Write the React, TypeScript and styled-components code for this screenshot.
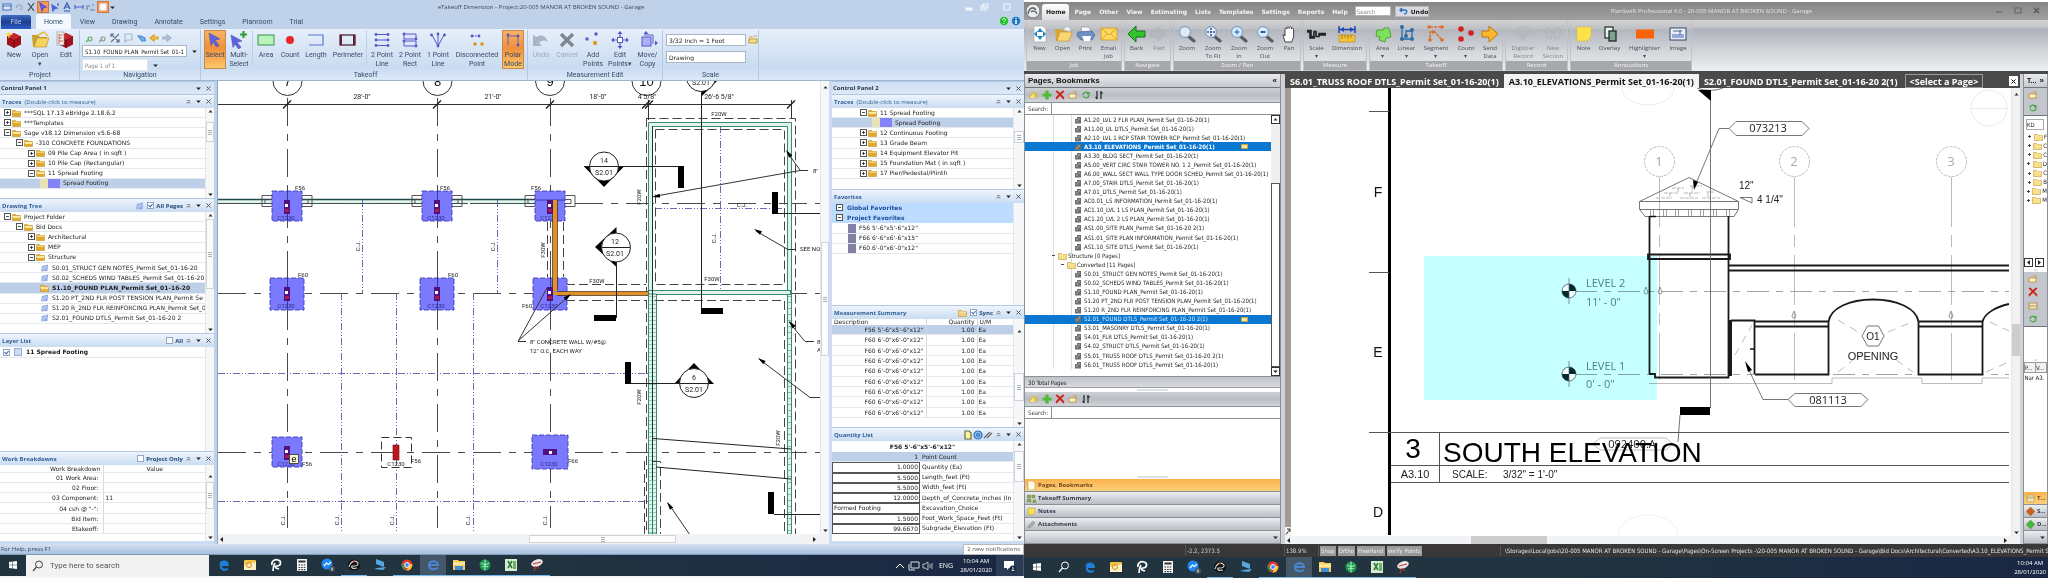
import React, { ReactNode } from 'react';
import styled, { createGlobalStyle, css } from 'styled-components';

const dejavu = '"DejaVu Sans", sans-serif';
const condensed = '"DejaVu Sans Condensed", "DejaVu Sans", sans-serif';
const open = '"Open Sans", sans-serif';
const roboto = 'Roboto, sans-serif';
const arial = '"Liberation Sans", sans-serif';

const Global = createGlobalStyle`
  *, *::before, *::after { box-sizing: border-box; }
  body { margin: 0; background: #fff; }
  button, input, select { font: inherit; color: inherit; margin: 0; padding: 0; border: 0; background: none; border-radius: 0; }
  button { cursor: default; }
  ul { list-style: none; margin: 0; padding: 0; }
  svg { display: block; flex: none; }
  table { border-collapse: collapse; border-spacing: 0; }
  td, th { padding: 0; font-weight: inherit; text-align: left; }
`;

const Desktop = styled.div`
  display: flex;
  min-height: 100vh;
  font: 6px/8px ${dejavu};
  color: #1c1c1c;
`;
const Monitor = styled.div`
  flex: 1 1 0;
  min-width: 0;
  display: flex;
  flex-direction: column;
`;

/* ---------- small glyphs ---------- */
const Up = ({ c = '#333' }: { c?: string }) => <svg width="7" height="7" viewBox="0 0 7 7"><path d="M1.5 4.5h4L3.5 2z" fill={c} /></svg>;
const Down = ({ c = '#222' }: { c?: string }) => <svg width="7" height="7" viewBox="0 0 7 7"><path d="M1.2 2.5h4.6L3.5 5z" fill={c} /></svg>;
const LeftTri = () => <svg width="7" height="7" viewBox="0 0 7 7"><path d="M5 1v5L2 3.500z" fill="#222" /></svg>;
const RightTri = () => <svg width="7" height="7" viewBox="0 0 7 7"><path d="M2 1v5l3-2.500z" fill="#222" /></svg>;
const Cross = ({ c = '#555' }: { c?: string }) => <svg width="7" height="7" viewBox="0 0 7 7"><path d="M1.500 1.500l4 4M5.500 1.500l-4 4" stroke={c} fill="none" /></svg>;
const Collapse = () => <svg width="7" height="7" viewBox="0 0 7 7"><path d="M2 3.500L3.500 2 5 3.500M2 5.500L3.500 4 5 5.500" stroke="#444" strokeWidth=".8" fill="none" /></svg>;
const Folder = ({ isOpen, c = '#e0a92c' }: { isOpen?: boolean; c?: string }) => (
  <svg width="9" height="8" viewBox="0 0 9 8">
    <path d="M.5 1.500h3l1 1h4v5h-8z" fill={c} stroke="#b98616" strokeWidth=".5" />
    <path d={isOpen ? 'M.5 3.500h8M1 4.500h7' : 'M1 3.200h7'} stroke="#fbe7a0" strokeWidth="1" />
  </svg>
);
const Sheet = ({ c = '#8fa9e6' }: { c?: string }) => (
  <svg width="9" height="8" viewBox="0 0 9 8"><path d="M1 7.500L2 2l6-1.500L7.500 7z" fill={c} /><path d="M2 5l4-3M2 7l5-4" stroke="#dde6fa" strokeWidth=".8" /></svg>
);

/* ---------- drawn icons for the toolbars, 20 x 18 ---------- */
const cursorArrow = <path d="M4 2l11 6-5 1.200 4 5-2.500 1.800-3.500-5-2 3.500z" fill="#5f63dd" stroke="#4348b0" strokeWidth=".5" />;
const dots = (pts: number[][], c: string, r = 1.400) => pts.map(([x, y]) => <circle key={x + '-' + y} cx={x} cy={y} r={r} fill={c} />);
const P = '#5558c8';
const lens = (
  <><path d="M11 11l6 5" stroke="#555b66" strokeWidth="3" strokeLinecap="round" /><circle cx="8" cy="7" r="5.500" fill="#dcecfb" stroke="#8aa4c4" strokeWidth="1.300" /></>
);
const cube = <><path d="M10 2l7 3.500v8L10 17l-7-3.500v-8z" fill="#a3121a" /><path d="M3 5.500L10 9l7-3.500M10 9v8" stroke="#6d070d" fill="none" /><path d="M3 5.500L10 2l7 3.500L10 9z" fill="#c4272c" /></>;

const icons: Record<string, ReactNode> = {
  new: <>{cube}<path d="M5 0l1 2.500L9 3.500 6 4.500 5 8 4 4.500 1 3.500 4 2.500z" fill="#ffd83c" /></>,
  open: <><path d="M2 4h6l2 2h7v10H3z" fill="#caa02c" /><path d="M4 16L7 7h12l-3 9z" fill="#f3d45e" stroke="#b98b1c" strokeWidth=".6" /><path d="M8 4l6-3 4 4" stroke="#e6c042" fill="none" strokeWidth="1.500" /></>,
  edit: <>{cube}<rect x="1" y="1" width="7" height="13" fill="#f4f0e8" stroke="#888" strokeWidth=".6" /><path d="M3 3v10M3 4h4M3 7h3M3 10h4" stroke="#b33" strokeWidth=".7" /></>,
  select: cursorArrow,
  multi: <><g transform="translate(-2 2)">{cursorArrow}</g><path d="M14.500 0v7M11 3.500h7" stroke="#2e9d3a" strokeWidth="2.200" /></>,
  area: <rect x="2" y="4" width="16" height="10" fill="#b9f5bb" stroke="#3b8f52" />,
  count: <circle cx="10" cy="9" r="4" fill="#ea2626" />,
  length: <path d="M2 4h15v10H3" fill="none" stroke="#5277cf" strokeWidth="1.200" />,
  perimeter: <><rect x="2" y="4" width="15" height="10" fill="none" stroke="#5a2236" strokeWidth="1.300" /><path d="M3 4v10M16 4v10" stroke="#5a2236" strokeWidth="2" /></>,
  line2: <><path d="M4 3.500h12M4 9h12M4 14.500h12" stroke={P} />{dots([[4, 3.500], [16, 3.500], [4, 9], [16, 9], [4, 14.500], [16, 14.500]], P)}</>,
  rect2: <><path d="M4 3h12v5H4zM4 10h12v5H4z" stroke={P} fill="#dfe3fb" />{dots([[4, 3], [16, 8], [4, 10], [16, 15]], P)}</>,
  line1: <><path d="M10 15L4 4M10 15V4M10 15l6-11" stroke={P} />{dots([[3.500, 4], [10, 3], [16.500, 4], [10, 15]], P)}</>,
  disc: <><path d="M5 5h7" stroke={P} strokeDasharray="2 1" />{dots([[5, 5], [12, 5]], P)}{dots([[8, 13], [15, 13]], '#dd8f1c', 1.800)}</>,
  polar: <><path d="M5 4v10M5 5h10v9" stroke="#6c5fae" fill="none" />{dots([[5, 4], [15, 5], [15, 14]], '#5b4fc0')}</>,
  undo: <path d="M2 4v11h9l-3-3c3-3 6-3 9-1C15 5 10 3 6 6z" fill="#a9b4c6" />,
  cancel: <path d="M4 3l12 12M16 3L4 15" stroke="#7f8690" strokeWidth="3.500" />,
  add: <>{dots([[13, 3], [4, 8]], P, 1.700)}{dots([[12, 12]], '#e29a24', 2.200)}</>,
  editp: <><path d="M10 1v16M2 9h16" stroke={P} strokeWidth="1.200" /><rect x="7.500" y="6.500" width="5" height="5" fill="#fff" stroke={P} /><path d="M10 0l2.500 3h-5zM10 18l2.500-3h-5zM1 9l3-2.500v5zM19 9l-3-2.500v5z" fill={P} /></>,
  move: <><rect x="4" y="6" width="9" height="9" fill="#aab2f3" stroke={P} /><path d="M6 4h9v9" fill="none" stroke={P} /><path d="M8 0l2.500 3h-5zM20 12l-3-2.500v5z" fill={P} /></>,

  psNew: <><path d="M4 1h9l3 3v13H4z" fill="#fff" stroke="#9aa" strokeWidth=".7" /><path d="M10 3l3 4H7zM10 15l3-4H7zM4 9l3-3v6zM16 9l-3-3v6z" fill="#1d7fc4" /></>,
  psOpen: <><path d="M2 4h6l2 2h7v10H3z" fill="#d7a63a" /><path d="M4 16L7 7h12l-3 9z" fill="#fbd773" stroke="#c2922a" strokeWidth=".6" /><path d="M10 5l3-4 5 2-1 4z" fill="#e8f0e0" stroke="#88a" strokeWidth=".4" /></>,
  print: <><path d="M5 2h8l2 5H6z" fill="#f5f7fb" stroke="#889" strokeWidth=".6" /><path d="M2 7l14-1 3 4-3 5H5L1 11z" fill="#6f8fc4" stroke="#40598a" strokeWidth=".6" /><path d="M6 11h9l-1 5H8z" fill="#fff" /></>,
  email: <><rect x="2" y="3" width="16" height="12" fill="#ffd95c" stroke="#d19a22" strokeWidth=".8" /><path d="M2 3l8 7 8-7M2 15l6-6M18 15l-6-6" fill="none" stroke="#c8922a" strokeWidth=".8" /></>,
  back: <path d="M1 9l8-8v5h9v6H9v5z" fill="#35c22d" stroke="#15731a" strokeWidth="1" />,
  fwd: <path d="M17 9L9 2v4H2v6h7v4z" fill="#b3b5b9" stroke="#a1a3a7" strokeWidth=".6" />,
  zoom: lens,
  fit: <>{lens}<path d="M8 3v8M4 7h8" stroke="#33557f" strokeWidth="1.500" strokeDasharray="2 1" /></>,
  zin: <>{lens}<path d="M8 4.500v5M5.500 7h5" stroke="#3d86d8" strokeWidth="1.500" /></>,
  zout: <>{lens}<path d="M5.500 7h5" stroke="#1e4c9a" strokeWidth="1.800" /></>,
  pan: <path d="M6 17L4 10c0-1 1.500-1 2 1V4c0-1.300 1.800-1.300 2 0 0-3 2-3 2.200-.5C10.500 1 12.500 1 12.600 4c.4-1.500 2-1.300 2 .5V12l-2 5z" fill="#fff" stroke="#333" strokeWidth=".9" />,
  scale: <path d="M0 5.500h4v6h3v-5h2v5h3v-3h7M0 7h3v6h5M12 10h7" fill="none" stroke="#222" strokeWidth="1.600" />,
  dim: <><path d="M2 1v7M18 1v7M2 4.500h16" stroke="#1b48b8" strokeWidth="1.500" /><path d="M3 4.500l4-2.500v5zM17 4.500L13 2v5z" fill="#1b48b8" /><rect x="2" y="10" width="16" height="7" fill="#f4c53a" stroke="#a8821a" strokeWidth=".6" /><path d="M5 10v4M8 10v3M11 10v4M14 10v3" stroke="#7d5d0a" strokeWidth=".7" /></>,
  psArea: <path d="M4 5h6l1-2h5l2 9-5 1-1 4-6-2 1-3-4-1z" fill="#7fe05e" stroke="#3b9a2c" strokeWidth=".8" />,
  linear: <><path d="M5 2v12h10V6H9v5" fill="none" stroke="#2a6ea8" strokeWidth="1.300" />{dots([[5, 2], [5, 14], [15, 14], [15, 5], [9, 11]], '#2a6ea8', 2)}</>,
  segment: <><path d="M4 2h12M4 6v10M8 6l8 9" stroke="#d9702a" strokeWidth="1.500" strokeDasharray="3 1" />{dots([[3, 2], [16, 2], [4, 15], [16, 15], [7, 7]], '#d9702a', 1.800)}</>,
  psCount: dots([[5, 4], [15, 8], [5, 14]], '#d8201f', 2.800),
  send: <path d="M2 6h7V1l9 8-9 8v-5H2z" fill="#fbb62a" stroke="#b87a12" strokeWidth="1" />,
  digit: <path d="M3 3c3-3 11-3 14 0 2 4-1 8-4 10l-3 4-3-4C4 11 1 7 3 3z" fill="#b5b7bb" />,
  section: <path d="M3 2l5 3v9l-5-3zM11 4l5-2 2 4-3 8-4-2z" fill="none" stroke="#a9acb1" strokeWidth="1" />,
  note: <path d="M3 2h14v10l-4 4H3z" fill="#fbe14c" stroke="#d6b82a" strokeWidth=".5" />,
  overlay: <><rect x="5" y="2" width="8" height="11" fill="#eef3ee" stroke="#2c3b35" strokeWidth="1.300" /><rect x="9" y="6" width="7" height="10" fill="#7da58e" stroke="#1d2b25" strokeWidth="1.300" /></>,
  highlighter: <rect x="1" y="4.500" width="18" height="9" fill="#fb6308" />,
  image: <><rect x="2" y="3" width="16" height="12" fill="#e9eef8" stroke="#33466e" /><rect x="4" y="9" width="12" height="4" fill="#93a9d8" /><path d="M5 6h9M12 5v5" stroke="#33466e" strokeWidth=".8" /></>,
};
const Icon = ({ n }: { n: string }) => <svg width="20" height="18" viewBox="0 0 20 18" aria-hidden="true">{icons[n]}</svg>;

/* ---------- scroll bars ---------- */
const VBar = styled.div<{ $w: number; $ps?: boolean }>`
  flex: none;
  width: ${p => p.$w}px;
  display: flex;
  flex-direction: column;
  align-items: center;
  background: ${p => (p.$ps ? '#f1f1f1' : '#f6f7f9')};
  border-left: 1px solid #e3e6ea;
`;
const VGap = styled.div<{ $h?: number }>`
  ${p => (p.$h === undefined ? 'flex: 1;' : `flex: none; height: ${p.$h}px;`)}
`;
const VThumb = styled.div<{ $h: number; $c?: string }>`
  flex: none;
  width: 100%;
  height: ${p => p.$h}px;
  border: 1px solid ${p => p.$c || '#d0d4da'};
  background: ${p => p.$c || '#fbfcfd'};
  display: flex;
  align-items: center;
  justify-content: center;
`;
const Grip = () => <svg width="4" height="5" viewBox="0 0 4 5"><path d="M0 .5h4M0 2.500h4M0 4.500h4" stroke="#8a8f98" strokeWidth=".7" /></svg>;
const ScrollV = ({ gap, thumb, w = 9 }: { gap?: number; thumb?: number; w?: number }) => (
  <VBar $w={w}>
    <Up />
    {thumb ? <><VGap $h={gap} /><VThumb $h={thumb}><Grip /></VThumb></> : null}
    <VGap />
    <Down />
  </VBar>
);
const HBar = styled.div<{ $h: number }>`
  flex: none;
  height: ${p => p.$h}px;
  display: flex;
  align-items: center;
  background: #f2f3f4;
`;
const HGap = styled.div<{ $g: number }>`flex: ${p => p.$g} 1 0;`;
const HThumb = styled.div<{ $g: number; $flat?: boolean }>`
  flex: ${p => p.$g} 1 0;
  height: ${p => (p.$flat ? '100%' : '8px')};
  background: ${p => (p.$flat ? '#cdcdcd' : '#fdfdfd')};
  border: ${p => (p.$flat ? '0' : '1px solid #cfd3d8')};
  display: flex;
  align-items: center;
  justify-content: center;
`;

/* ================= eTakeoff ================= */
const ET = styled.section`
  flex: 1;
  display: flex;
  flex-direction: column;
  background: #bfd2ea;
`;
const TitleBar = styled.header`
  height: 14px;
  display: flex;
  align-items: center;
  color: #3f4957;
  font: 6px/8px ${open};
`;
const Quick = styled.div`
  width: 118px;
  padding-left: 1px;
  display: flex;
  align-items: center;
`;
const QuickButton = styled.button<{ $on?: boolean }>`
  width: 12px;
  height: 12px;
  display: flex;
  align-items: center;
  justify-content: center;
  ${p => p.$on && css`background: #f39a5a; border: 1px solid #d4733a;`}
`;
const WindowTitle = styled.h1`
  flex: 1;
  margin: 0;
  font: inherit;
  text-align: center;
  white-space: nowrap;
`;
const Controls = styled.div<{ $w: number; $gap: number }>`
  width: ${p => p.$w}px;
  display: flex;
  gap: ${p => p.$gap}px;
`;
const TabRow = styled.nav`
  height: 15px;
  display: flex;
  align-items: flex-end;
  gap: 1px;
  padding: 0 2px 0 1px;
  font: 7px/14px ${roboto};
  color: #334b69;
`;
const FileTab = styled.button`
  width: 30px;
  height: 14px;
  margin-right: 4px;
  border-radius: 2px 2px 0 0;
  background: linear-gradient(#3d6cc2, #1c3f93 50%, #2c5fc4);
  color: #b9cdf0;
`;
const Tab = styled.button<{ $on?: boolean }>`
  height: 15px;
  padding: 0 8px;
  border-radius: 2px 2px 0 0;
  background: ${p => (p.$on ? '#f4f9ff' : 'transparent')};
`;
const Grow = styled.div`flex: 1;`;
const Ribbon = styled.div`
  height: 52px;
  display: flex;
  background: linear-gradient(#e6effa, #d6e4f5 40%, #c9dcf1 75%, #dbe8f7);
  border-bottom: 1px solid #9fb4cf;
  border-top: 1px solid #e8f1fb;
  font: 7px/9px ${roboto};
  color: #394b69;
`;
const Group = styled.div<{ $w: number; $pad?: number }>`
  width: ${p => p.$w}px;
  flex: none;
  padding-left: ${p => p.$pad || 0}px;
  border-right: 1px solid #b5c8e0;
  display: flex;
  flex-direction: column;
`;
const GroupRow = styled.div`
  display: flex;
  height: 40px;
`;
const GroupName = styled.div`
  text-align: center;
  line-height: 10px;
`;
const Tool = styled.button<{ $w: number; $on?: boolean; $off?: boolean }>`
  width: ${p => p.$w}px;
  height: 39px;
  display: flex;
  flex-direction: column;
  align-items: center;
  gap: 2px;
  white-space: pre;
  text-align: center;
  border: 1px solid transparent;
  ${p => p.$on && css`background: linear-gradient(#f6b469, #f08f3c 45%, #fbc66a); border-color: #c58a4a;`}
  ${p => p.$off && css`color: #9aa8bb;`}
`;
const Divider = styled.div`
  width: 1px;
  height: 36px;
  margin-right: 1px;
  background: #bfd0e6;
`;
const NavStack = styled.div`
  width: 118px;
  height: 40px;
  padding: 2px 0 0 2px;
  font: 6px/10px ${condensed};
  color: #333;
`;
const NavIcons = styled.div`
  display: flex;
  gap: 3px;
  height: 12px;
  padding-left: 2px;
  align-items: center;
`;
const FieldLine = styled.div`
  display: flex;
  align-items: center;
  gap: 4px;
  height: 14px;
`;
const Field = styled.input<{ $w: number; $pale?: boolean }>`
  width: ${p => p.$w}px;
  height: 12px;
  padding: 0 2px;
  background: #fff;
  border: 1px solid ${p => (p.$pale ? '#dfe6ee' : '#a9b6c6')};
  color: ${p => (p.$pale ? '#8a8a8a' : '#222')};
`;
const ScaleStack = styled.div`
  padding: 4px 0 0 3px;
  display: flex;
  flex-direction: column;
  gap: 5px;
  font: 6px/10px ${dejavu};
`;
const ScaleIcon = styled.div`padding: 5px 0 0 2px;`;

const Work = styled.div`
  flex: 1;
  min-height: 463px;
  display: flex;
`;
const Side = styled.aside<{ $w: number }>`
  flex: none;
  width: ${p => p.$w}px;
  display: flex;
  flex-direction: column;
  background: #fff;
  border-bottom: 3px solid #cddcf0;
`;
const RightSide = styled(Side)`border-left: 3px solid #cddcf0;`;
const PanelTitle = styled.div<{ $sub?: boolean }>`
  flex: none;
  height: ${p => (p.$sub ? 14 : 13)}px;
  padding: 0 1px 0 ${p => (p.$sub ? 2 : 1)}px;
  display: flex;
  align-items: center;
  background: linear-gradient(${p => (p.$sub ? '#eef5fd, #cadcf1' : '#cfdff2, #dce9f8')});
  border-top: 1px solid #b3c7e0;
  font: 700 6px/8px ${open};
  color: ${p => (p.$sub ? '#2f5f96' : '#23374f')};
  em { font-weight: 400; font-style: normal; margin-left: 3px; }
  label { display: flex; align-items: center; gap: 2px; margin-left: 3px; color: #24497a; }
`;
const PanelButton = styled.button`
  width: 10px;
  height: 10px;
  display: flex;
  align-items: center;
  justify-content: center;
`;
const Check = styled.input.attrs({ type: 'checkbox' })`
  appearance: none;
  width: 7px;
  height: 7px;
  border: 1px solid #93a7c4;
  background: #fff;
  position: relative;
  &:checked::after {
    content: '';
    position: absolute;
    left: 1px;
    top: 0;
    width: 3px;
    height: 4px;
    border: solid #3b63a8;
    border-width: 0 1px 1px 0;
    transform: rotate(40deg);
  }
`;
const PanelHead = ({ title, note, extra }: { title: string; note?: string; extra?: ReactNode }) => (
  <PanelTitle $sub>
    {title}{note && <em>{note}</em>}
    <Grow />
    {extra}
    <PanelButton aria-label="Collapse"><Collapse /></PanelButton>
    <PanelButton aria-label="Menu"><Down /></PanelButton>
    <PanelButton aria-label="Close"><Cross /></PanelButton>
  </PanelTitle>
);
const ControlHead = ({ title }: { title: string }) => (
  <PanelTitle>
    {title}<Grow />
    <PanelButton aria-label="Menu"><Down /></PanelButton>
    <PanelButton aria-label="Close"><Cross /></PanelButton>
  </PanelTitle>
);
const Body = styled.div<{ $h?: number }>`
  ${p => (p.$h ? `height: ${p.$h}px; flex: none;` : 'flex: 1;')}
  display: flex;
  background: #fff;
`;
const Fill = styled.div`
  flex: 1;
  min-width: 0;
  overflow: hidden;
`;
const Tree = styled.ul<{ $h: number }>`
  height: ${p => p.$h}px;
  display: flex;
  flex-direction: column;
`;
const TreeRow = styled.li<{ $l: number; $on?: boolean; $bold?: boolean; $group?: boolean }>`
  flex: 1;
  min-height: 0;
  padding-left: ${p => 4 + p.$l * 12}px;
  display: flex;
  align-items: center;
  white-space: nowrap;
  border-bottom: 1px solid #e4e7eb;
  ${p => p.$on && css`background: #bdcfe9;`}
  ${p => p.$group && css`background: #bddcff; color: #1f4f9a; border-color: #bddcff;`}
  ${p => (p.$bold || p.$group) && css`font-weight: 700;`}
`;
const Expander = styled.button`
  width: 7px;
  height: 7px;
  margin-right: 1px;
  border: 1px solid #555;
  background: #fff;
  display: flex;
  align-items: center;
  justify-content: center;
`;
const Sign = ({ plus }: { plus?: boolean }) => <svg width="5" height="5" viewBox="0 0 5 5"><path d={plus ? 'M1 2.500h3M2.500 1v3' : 'M1 2.500h3'} stroke="#222" strokeWidth=".8" /></svg>;
const Name = styled.span<{ $m?: number }>`margin-left: ${p => p.$m ?? 3}px;`;
const Swatch = styled.span<{ $w: number; $c: string }>`
  flex: none;
  width: ${p => p.$w}px;
  height: 9px;
  background: ${p => p.$c};
`;
type Node = { l: number; t: string; k: '+' | '-' | 'sheet' | 'current' | 'trace' };
const TreeList = ({ rows, h }: { rows: Node[]; h: number }) => (
  <Tree $h={h}>
    {rows.map(r => (
      <TreeRow key={r.t} $l={r.l} $on={r.k === 'trace' || r.k === 'current'} $bold={r.k === 'current'}>
        {r.k === '+' || r.k === '-' ? (
          <><Expander aria-label={r.k === '+' ? 'Expand' : 'Collapse'}><Sign plus={r.k === '+'} /></Expander><Folder isOpen={r.k === '-'} /></>
        ) : r.k === 'trace' ? (
          <><Swatch $w={8} $c="#e9e2b4" /><Swatch $w={12} $c="#8583f8" /></>
        ) : r.k === 'current' ? <Folder isOpen c="#f2b43a" /> : <Sheet />}
        <Name>{r.t}</Name>
      </TreeRow>
    ))}
  </Tree>
);
const traces1: Node[] = [
  { l: 0, k: '+', t: '***SQL 17.13 eBridge 2.18.6.2' },
  { l: 0, k: '+', t: '***Templates' },
  { l: 0, k: '-', t: 'Sage v18.12 Dimension v5.6-68' },
  { l: 1, k: '-', t: '-310 CONCRETE FOUNDATIONS' },
  { l: 2, k: '+', t: '09 Pile Cap Area ( in sqft )' },
  { l: 2, k: '+', t: '10 Pile Cap (Rectangular)' },
  { l: 2, k: '-', t: '11 Spread Footing' },
  { l: 3, k: 'trace', t: 'Spread Footing' },
];
const traces2: Node[] = [
  { l: 2, k: '-', t: '11 Spread Footing' },
  { l: 3, k: 'trace', t: 'Spread Footing' },
  { l: 2, k: '+', t: '12 Continuous Footing' },
  { l: 2, k: '+', t: '13 Grade Beam' },
  { l: 2, k: '+', t: '14 Equipment Elevator Pit' },
  { l: 2, k: '+', t: '15 Foundation Mat  ( in sqft )' },
  { l: 2, k: '+', t: '17 Pier/Pedestal/Plinth' },
];
const drawings: Node[] = [
  { l: 0, k: '-', t: 'Project Folder' },
  { l: 1, k: '-', t: 'Bid Docs' },
  { l: 2, k: '+', t: 'Architectural' },
  { l: 2, k: '+', t: 'MEP' },
  { l: 2, k: '-', t: 'Structure' },
  { l: 3, k: 'sheet', t: 'S0.01_STRUCT GEN NOTES_Permit Set_01-16-20' },
  { l: 3, k: 'sheet', t: 'S0.02_SCHEDS WIND TABLES_Permit Set_01-16-20' },
  { l: 3, k: 'current', t: 'S1.10_FOUND PLAN_Permit Set_01-16-20' },
  { l: 3, k: 'sheet', t: 'S1.20 PT_2ND FLR POST TENSION PLAN_Permit Se' },
  { l: 3, k: 'sheet', t: 'S1.20 R_2ND FLR REINFORCING PLAN_Permit Set_0' },
  { l: 3, k: 'sheet', t: 'S2.01_FOUND DTLS_Permit Set_01-16-20 2' },
];
const LayerRow = styled.label`
  display: flex;
  align-items: center;
  gap: 4px;
  height: 11px;
  padding-left: 3px;
  font-weight: 700;
  border-bottom: 1px solid #e4e7eb;
`;
const LayerChip = styled.span`
  width: 8px;
  height: 8px;
  background: #c9dcf4;
  border: 1px solid #8fb0da;
`;
const Breakdown = styled.table`
  width: 100%;
  height: 69px;
  line-height: 7px;
  th, td { border-bottom: 1px solid #e4e7eb; padding: 0 4px 0 2px; }
  th:first-child { width: 103px; text-align: right; border-right: 1px solid #d5dae0; }
  thead th:last-child { padding-left: 43px; }
  thead th:first-child { padding-right: 2px; }
`;
const Measures = styled.table`
  width: 100%;
  height: 99px;
  line-height: 7px;
  thead th { line-height: 6px; border-right: 1px solid #d5dae0; padding-left: 2px; }
  td { border-bottom: 1px solid #e4e7eb; border-right: 1px solid #d5dae0; padding: 0 2px 0 1px; }
  td:nth-child(1), td:nth-child(2), th:nth-child(2) { text-align: right; }
  th:nth-child(2) { padding-right: 2px; width: 51px; }
  th:nth-child(3) { width: 36px; }
  td:last-child, th:last-child { border-right: 0; }
`;
const MeasureRow = styled.tr<{ $on?: boolean }>`
  background: ${p => (p.$on ? '#bdcfe9' : '#fff')};
`;
const Quantities = styled.div`
  height: 82px;
  display: flex;
  flex-direction: column;
`;
const QuantityTitle = styled.div`
  height: 11px;
  font-weight: 700;
  line-height: 11px;
  text-align: center;
`;
const QuantityRow = styled.label<{ $on?: boolean }>`
  flex: 1;
  min-height: 0;
  display: flex;
  gap: 2px;
  align-items: center;
  white-space: nowrap;
  background: ${p => (p.$on ? '#bdcfe9' : '#fff')};
  border-bottom: 1px solid #e4e7eb;
`;
const cell = css`
  width: 88px;
  flex: none;
  align-self: stretch;
  margin-bottom: -1px;
  padding: 0 1px;
`;
const QuantityInput = styled.input<{ $flat?: boolean }>`
  ${cell}
  text-align: right;
  min-height: 0;
  border: ${p => (p.$flat ? '1px solid transparent' : '1px solid #555')};
`;
const QuantitySelect = styled.select`
  ${cell}
  appearance: none;
  border: 1px solid #555;
`;
const Canvas = styled.main`
  flex: 1;
  min-width: 0;
  display: flex;
  flex-direction: column;
  border-left: 1px solid #8ea3bf;
  margin-left: 3px;
  background: #fff;
`;
const CanvasRow = styled.div`
  flex: 1;
  min-height: 0;
  display: flex;
`;
const Sheetview = styled.div`
  flex: 1;
  min-width: 0;
  overflow: hidden;
  svg { width: 100%; height: 100%; }
`;
const Status = styled.footer`
  height: 11px;
  padding-left: 1px;
  display: flex;
  align-items: center;
  justify-content: space-between;
  background: linear-gradient(#d3e1f2, #a9c0de);
  border-bottom: 1px solid #8299b8;
  color: #33475f;
  font: 6px/9px ${open};
`;
const Notice = styled.div`
  height: 11px;
  padding: 0 3px;
  background: #fff;
  border: 1px solid #b9b9b9;
  line-height: 9px;
  color: #555;
`;

/* ---------- foundation plan ---------- */
type TProps = { x: number; y: number; s?: number; a?: 'start' | 'middle' | 'end'; r?: boolean; f?: string; c?: string; children: ReactNode };
const T = ({ x, y, s = 6, a = 'middle', r, f = roboto, c = '#222', children }: TProps) => (
  <text x={x} y={y} fontSize={s} fontFamily={f} textAnchor={a} fill={c} transform={r ? `rotate(-90 ${x} ${y})` : undefined}>{children}</text>
);
const grid = { stroke: '#4a4a4a', strokeDasharray: '28 8 7 8', fill: 'none' };
const joint = { stroke: '#5b57a8', strokeDasharray: '7 2 1 2 1 2', fill: 'none', strokeWidth: 0.9 };
const dash = { stroke: '#444', strokeDasharray: '9 4', fill: 'none' };
const footings = [
  [287, 206, 15, 15], [437, 206, 15, 15], [550, 206, 15, 15],
  [287, 294, 17, 16], [437, 294, 17, 16], [550, 294, 17, 16],
  [287, 452, 15, 15], [550, 452, 18, 17],
];
const Arrowhead = ({ x, y, d }: { x: number; y: number; d: number }) => <path d="M0 0l8-2v4z" fill="#000" transform={`translate(${x} ${y}) rotate(${d})`} />;
const FoundationPlan = () => (
  <svg role="img" aria-label="Foundation plan">
    <g transform="translate(-218 -81)">
      <rect x="218" y="199" width="320" height="4" fill="#e2f5ec" />
      <path d="M218 199.500H556" stroke="#1f4a48" strokeWidth="1.500" />
      <path d="M218 203.500H536" stroke="#2b5d58" strokeDasharray="40 2" />
      <path d="M218 203.500H820M218 293.500H820M218 452.500H820" {...grid} />
      <path d="M287.500 98V528M437.500 98V528M550.500 98V528" {...grid} />
      <path d="M362.500 200V293M497.500 200V293M341.500 293V533M396.500 293V533M473.500 293V533M218 373.500H648M218 501.500H648M720.500 126V290M655 208.500H786" {...joint} />
      <path d="M218 104.500H791M791.500 100V118M648.500 100V120" stroke="#333" />
      {[287, 437, 550, 646, 649, 791].map(x => <path key={x} d={`M${x - 4} 108.500l8-8`} stroke="#222" strokeWidth="1.400" />)}
      {([[287.5, '7'], [437.5, '8'], [550, '9'], [646.5, '10']] as [number, string][]).map(([x, t]) => (
        <g key={t}><circle cx={x} cy="81" r="14.500" fill="#fff" stroke="#333" /><T x={x} y={86} s={13} f={arial} c="#111">{t}</T></g>
      ))}
      <T x={362} y={99} s={7}>28'-0"</T><T x={493} y={99} s={7}>21'-0"</T><T x={598} y={99} s={7}>18'-0"</T><T x={647} y={99} s={7}>4 5/8"</T><T x={719} y={99} s={7}>26'-6 5/8"</T>

      {/* shaft walls */}
      <g fill="#dff5ec" stroke="#2c7a68" strokeWidth=".9">
        <path d="M648.500 122.500H791.500V534H787.500V126.500H652.500V293H648.500z" />
        <rect x="648.500" y="290.500" width="142" height="4" />
        <path d="M648.500 294V534H656.500V294z" />
      </g>
      <path d="M652.500 294V534" stroke="#2c7a68" />
      <path d="M652.500 296V534" stroke="#3b9a80" strokeWidth="7" strokeDasharray="1 3" opacity=".45" />
      <path d="M789.500 296V534" stroke="#3b9a80" strokeWidth="3" strokeDasharray="1 5" opacity=".6" />
      <path d="M652.500 126V480" stroke="#173a36" strokeWidth="1" />
      <path d="M646.500 118.500H795.500V534M646.500 118V534M655.500 129.500H784.500V284.500H655.500zM566 284.500H646M566 300.500H646M655 300.500H784.500V534M653 461.500H660.500V534M644.500 461V534" {...dash} />
      <path d="M547.500 222V277M563.500 222V277" {...dash} />
      <T x={719} y={116}>F20W</T><T x={641} y={197} r>F20W</T><T x={641} y={397} r>F20W</T><T x={780} y={438} r>F20W</T>
      <T x={712} y={281}>F30W</T><T x={597} y={283}>F30W</T><T x={545} y={250} r>F30W</T>
      <T x={742} y={207}>C.J.</T><T x={716} y={238} r>C.J.</T>
      {[[360, 246], [495, 246], [285, 520], [339, 520], [394, 520], [470, 520], [547, 520]].map(([x, y]) => <T key={x} x={x} y={y} r>C.J.</T>)}

      {/* column bases and placed footings */}
      {[287, 437, 550].map(x => <path key={x} d={`M${x - 25} 195.500h50v11h-50zM${x - 22} 199.500h43v4h-43z`} fill="none" stroke="#444" strokeWidth=".9" />)}
      {footings.map(([x, y, w, h]) => (
        <g key={`${x}-${y}`}>
          <rect x={x - w} y={y - h} width={w * 2} height={h * 2} fill="#7b7aff" stroke="#3f3db0" strokeDasharray="5 2" strokeWidth=".9" />
          <T x={x - 1} y={y + 14} c="#2b2a86">C1230</T>
        </g>
      ))}
      <path d="M287.500 191V221M437.500 191V221M287.500 277V310M437.500 277V310M550.500 277V310M535 200H565" stroke="#33318f" strokeWidth=".9" />
      <path d="M555 200V291" stroke="#e0912a" strokeWidth="4" /><path d="M552.500 200V290M557.500 200V290" stroke="#4d3413" strokeWidth=".8" />
      <path d="M553 293.500H648" stroke="#e0912a" strokeWidth="3" /><path d="M557 291.500H648M557 295.500H648" stroke="#4d3413" strokeWidth=".8" />
      {[[287, 206], [437, 206], [550, 206], [287, 293], [437, 293], [550, 293], [287, 452]].map(([x, y]) => (
        <g key={`${x}-${y}`}><rect x={x - 3} y={y - 6} width="6" height="14" fill="#51107f" /><rect x={x - 2} y={y + 3} width="4" height="3" fill="#b01848" /><rect x={x - 2} y={y - 2} width="3" height="3" fill="#fff" /></g>
      ))}
      <rect x="543" y="449" width="14" height="6" fill="#51107f" /><rect x="549" y="451" width="3" height="3" fill="#fff" />
      <rect x="381.500" y="437.500" width="30" height="30" fill="none" stroke="#333" strokeDasharray="8 4" />
      <rect x="393" y="445" width="6" height="15" fill="#c4141e" stroke="#6a0a10" strokeWidth=".6" />
      <T x={396} y={466}>C1230</T><T x={416} y={463}>F56</T>
      <T x={300} y={190}>F56</T><T x={445} y={190}>F56</T><T x={536} y={190}>F56</T>
      <T x={303} y={277}>F60</T><T x={453} y={277}>F60</T><T x={527} y={308}>F60</T>
      <T x={307} y={466}>F56</T><T x={573} y={463}>F66</T>
      <rect x="289.500" y="454.500" width="9" height="9" fill="#f7f5cf" stroke="#333" strokeWidth=".8" />
      <T x={294} y={462} s={9} f={arial} c="#000">e</T>

      {/* section markers */}
      <g stroke="#222">
        <path d="M584 166.500h40L604 187z" fill="#000" stroke="none" />
        <circle cx="604" cy="166.500" r="14.500" fill="#fff" /><path d="M584 166.500H680" />
        <path d="M616.500 227v40L595 247z" fill="#000" stroke="none" />
        <circle cx="616" cy="247.500" r="14.500" fill="#fff" /><path d="M602 247.500H630M616.500 262V318" />
        <path d="M674 384h40L694 363z" fill="#000" stroke="none" />
        <circle cx="694" cy="383" r="14.500" fill="#fff" /><path d="M631 383.500H708" />
        <path d="M701 81h16L701 97z" fill="#000" stroke="none" />
        <circle cx="701" cy="77" r="14.500" fill="#fff" /><path d="M701.500 92V310" />
      </g>
      <T x={604} y={163} s={7}>14</T><T x={604} y={175} s={7}>S2.01</T>
      <T x={615} y={244} s={7}>12</T><T x={615} y={256} s={7}>S2.01</T>
      <T x={694} y={380} s={7}>6</T><T x={694} y={392} s={7}>S2.01</T>
      <T x={701} y={85} s={7}>S2.01</T>
      <path d="M678 166h6v22h-6zM594 315h22v6h-22zM625 362h6v22h-6zM701 308h22v6h-22zM772 192h6v22h-6zM768 492h6v22h-6z" fill="#000" />
      <path d="M778 213.500H820M774 514.500H820M653 438.500L791 449M656 467L791 479" stroke="#222" />
      <path d="M656 196L800 170.500h8M787 152L800 170M756 231L788 249.500h8M789 322L805 341.500h9M759 359L810 397.500h10M668 503L690 535M526 341.500h-8L547 288M518 341L570 295" stroke="#333" fill="none" />
      <Arrowhead x={652} y={197} d={-10} /><Arrowhead x={786} y={150} d={54} /><Arrowhead x={754} y={229} d={30} />
      <Arrowhead x={789} y={321} d={50} /><Arrowhead x={758} y={358} d={36} /><Arrowhead x={667} y={502} d={55} /><Arrowhead x={571} y={294} d={140} />
      <T x={813} y={173} a="start">8"</T><T x={800} y={251} a="start">SEE NOTE</T><T x={817} y={344} a="start">8</T><T x={817} y={352} a="start">A</T>
      <T x={530} y={344} a="start">8" CONCRETE WALL W/#5@</T><T x={530} y={353} a="start">12" O.C. EACH WAY</T>
    </g>
  </svg>
);

/* ---------- task bar ---------- */
const Bar = styled.footer`
  height: 21px;
  flex: none;
  display: flex;
  align-items: stretch;
  background: linear-gradient(90deg, #21343f 50%, #1a2745);
  color: #fff;
`;
const TaskItem = styled.button<{ $w?: number; $on?: boolean; $run?: boolean }>`
  width: ${p => p.$w || 26}px;
  display: flex;
  align-items: center;
  justify-content: center;
  border-bottom: 1px solid ${p => (p.$run || p.$on ? '#76b9ed' : 'transparent')};
  background: ${p => (p.$on ? '#44586a' : 'transparent')};
`;
const SearchBox = styled.label`
  width: 183px;
  margin-right: 2px;
  display: flex;
  align-items: center;
  gap: 5px;
  padding-left: 5px;
  background: #f2f2f2;
  input { flex: 1; min-width: 0; font: 8px/12px ${roboto}; }
  input::placeholder { color: #555; opacity: 1; }
`;
const Tray = styled.div`
  display: flex;
  align-items: center;
  gap: 4px;
  margin-left: auto;
  padding-right: ${2}px;
  font: 6px/9px ${open};
  text-align: center;
`;
const TrayFull = styled(Tray)`padding-right: 0;`;
const TrayIcons = styled.div`display: flex;`;
const Language = styled.span`
  font-size: 7px;
  margin-right: 3px;
`;
const MailSlot = styled.button`
  width: 28px;
  align-self: stretch;
  display: flex;
  align-items: center;
  justify-content: center;
  background: #2b3a55;
  border-right: 1px solid #4a5870;
`;
const TI = ({ children }: { children: ReactNode }) => <svg width="14" height="14" viewBox="0 0 14 14" aria-hidden="true">{children}</svg>;
const searchGlyph = (c: string) => <TI><circle cx="8" cy="5.500" r="3.500" fill="none" stroke={c} /><path d="M5.500 8L2 12" stroke={c} strokeWidth="1.200" /></TI>;
const windowsGlyph = <TI><path d="M3 4l3.500-.5v3.200H3zM7 3.400L11 3v3.700H7zM3 7.200h3.500v3.300L3 10zM7 7.200h4V11l-4-.5z" fill="#fff" /></TI>;
const apps: { n: string; w: number; run?: boolean; on?: boolean; i: ReactNode }[] = [
  { n: 'Edge', w: 26, i: <path d="M2 7c1-6 10-6 10 1H5c0 3 4 3 6 2v2c-4 2-9 0-8-5 1-2 3-3 5-2-3 0-5 1-6 2z" fill="#1f7fd8" /> },
  { n: 'Outlook', w: 26, i: <><rect x="1" y="2" width="12" height="10" rx="1" fill="#f3c64a" /><path d="M1 7l12-3v8H1z" fill="#fdf0c0" /><circle cx="6" cy="7" r="2.500" fill="none" stroke="#d18d1a" /></> },
  { n: 'Reader', w: 26, i: <path d="M4 13c0-3 0-5 2-8M3 7c-1-4 3-6 6-5 4 1 3 6-1 6-2 0-2 1-1 2l3 1" fill="none" stroke="#fff" strokeWidth="1.700" /> },
  { n: 'Calculator', w: 26, i: <><rect x="2" y="1" width="10" height="12" fill="#f4f4f4" /><path d="M3.500 3.500h7" stroke="#333" strokeWidth="2" /><path d="M3.500 7h7M3.500 9.500h7M3.500 11.700h7" stroke="#333" strokeWidth="1.200" strokeDasharray="1.600 1" /></> },
  { n: 'Messenger', w: 26, i: <><circle cx="6" cy="6" r="5.500" fill="#1e88f5" /><path d="M3 8l2.500-3 2 1.500L10 4" stroke="#fff" fill="none" strokeWidth="1.200" /><circle cx="11" cy="11" r="3" fill="#44525e" /><path d="M11 9.500v3" stroke="#fff" /></> },
  { n: 'PlanSwift', w: 26, run: true, i: <><ellipse cx="7" cy="7" rx="6" ry="5.500" fill="#111" /><path d="M2 9c1-5 5-7 8-5 2 1 1 4-2 4H5c-1 2 1 3 5 2" stroke="#d8d8d8" fill="none" strokeWidth="1.200" /><circle cx="7" cy="3.500" r="1" fill="#d33" /></> },
  { n: 'Remote', w: 26, i: <path d="M3 1l8 3v5l-8-3zM4 10l9-1-3 3-9-1z" fill="#58a8e0" /> },
  { n: 'Chrome', w: 27, run: true, i: <><circle cx="7" cy="7" r="5.500" fill="#e23b2e" /><path d="M2 4.500L6 12A5.500 5.500 0 0 1 2 4.500z" fill="#2ba24c" /><path d="M6.500 12.500L10 6h2.300a5.500 5.500 0 0 1-5.800 6.500z" fill="#f7c52c" /><circle cx="7" cy="7" r="2.400" fill="#4285f4" stroke="#fff" /></> },
  { n: 'eTakeoff', w: 26, on: true, i: <path d="M12 10c-3 2-9 2-9-3s9-5 9 0H3" fill="none" stroke="#4a86d4" strokeWidth="2" /> },
  { n: 'Explorer', w: 26, run: true, i: <><path d="M1 2h5l1 1h6v9H1z" fill="#f6cf5a" /><rect x="3" y="8" width="8" height="4" fill="#3f8fd8" /><rect x="1" y="4.500" width="12" height="2.500" fill="#fde9a4" /></> },
  { n: 'Sage', w: 26, run: true, i: <><circle cx="7" cy="7" r="5.500" fill="#1b9a4e" /><path d="M7 1.500v11M3 5c3 2 5 2 8 0M4 9c2-1 4-1 6 0" stroke="#bff0cf" fill="none" /></> },
  { n: 'Excel', w: 26, run: true, i: <><rect x="1" y="1" width="12" height="12" fill="#d9ecd0" /><path d="M4 3l4 7M8 3l-4 7" stroke="#2a7d3e" strokeWidth="1.600" /><rect x="9" y="3" width="3" height="8" fill="#6fb06a" /></> },
  { n: 'Snip', w: 26, run: true, i: <><ellipse cx="7" cy="5" rx="6" ry="3.500" fill="#ece6ea" transform="rotate(-20 7 5)" /><path d="M3 6l8-2M6 8l-2 5M8 8v3" stroke="#c0392b" strokeWidth="1.100" /></> },
];
const AppItems = () => <>{apps.map(a => <TaskItem key={a.n} $w={a.w} $on={a.on} $run={a.run} aria-label={a.n}><TI>{a.i}</TI></TaskItem>)}</>;
const Clock = () => <span>10:04 AM<br />28/01/2020</span>;
const MainTaskbar = () => (
  <Bar>
    <TaskItem aria-label="Start">{windowsGlyph}</TaskItem>
    <SearchBox>{searchGlyph('#444')}<input aria-label="Search" placeholder="Type here to search" /></SearchBox>
    <AppItems />
    <TrayFull>
      <TrayIcons>
        <TI><path d="M3 9l4-4 4 4" fill="none" stroke="#fff" /></TI>
        <TI><path d="M4 3h8v6H4zM2 5v6h6" fill="none" stroke="#ddd" /></TI>
        <TI><path d="M2 5h2l3-2v8L4 9H2zM9 5v4M11 4v6" fill="none" stroke="#ddd" strokeWidth=".8" /></TI>
      </TrayIcons>
      <Language>ENG</Language>
      <Clock />
      <MailSlot aria-label="Notifications"><TI><path d="M1 2h10v7H6l-2 2V9H1z" fill="#fff" /><circle cx="10" cy="10" r="3.500" fill="#1d2a40" /><path d="M9 9c1-1 2 0 1 1l-1 1.500h2.500" stroke="#fff" fill="none" strokeWidth=".8" /></TI></MailSlot>
    </TrayFull>
  </Bar>
);
const SecondTaskbar = () => (
  <Bar>
    <TaskItem aria-label="Start">{windowsGlyph}</TaskItem>
    <TaskItem $w={27} aria-label="Search">{searchGlyph('#fff')}</TaskItem>
    <AppItems />
    <Tray><Clock /></Tray>
  </Bar>
);
const BottomStrip = styled.div`height: 2px; background: #f4f6f6;`;

const favorites = ['F56 5\'-6"x5\'-6"x12"', 'F66 6\'-6"x6\'-6"x15"', 'F60 6\'-0"x6\'-0"x12"'];
const quantities: [string, string][] = [
  ['1.0000', 'Quantity (Ea)'], ['5.5000', 'Length_feet (Ft)'], ['5.5000', 'Width_feet (Ft)'], ['12.0000', 'Depth_of_Concrete_inches (In'],
  ['Formed Footing', 'Excavation_Choice'], ['1.5000', 'Foot_Work_Space_Feet (Ft)'], ['99.6670', 'Subgrade_Elevation (Ft)'],
];
type ToolDef = [string, string, number, string?];
const tools1: ToolDef[] = [['select', 'Select', 22, 'on'], ['multi', 'Multi-\nSelect', 26]];
const tools2: ToolDef[] = [['area', 'Area', 24], ['count', 'Count', 24], ['length', 'Length', 28], ['perimeter', 'Perimeter', 36]];
const tools3: ToolDef[] = [['line2', '2 Point\nLine', 28], ['rect2', '2 Point\nRect', 28], ['line1', '1 Point\nLine', 28], ['disc', 'Disconnected\nPoint', 50], ['polar', 'Polar\nMode', 22, 'on']];
const tools4: ToolDef[] = [['undo', 'Undo', 26, 'off'], ['cancel', 'Cancel', 26, 'off'], ['add', 'Add\nPoints', 26], ['editp', 'Edit\nPoints▾', 28], ['move', 'Move/\nCopy', 27]];
const Tools = ({ list }: { list: ToolDef[] }) => (
  <>{list.map(([i, t, w, s]) => <Tool key={i} $w={w} $on={s === 'on'} $off={s === 'off'}><Icon n={i} /><span>{t}</span></Tool>)}</>
);
const Mini = ({ d, c, f = 'none' }: { d: string; c: string; f?: string }) => <svg width="10" height="10" viewBox="0 0 10 10"><path d={d} stroke={c} fill={f} strokeWidth="1.200" /></svg>;
const RightPad = styled.div`width: 11px;`;

const ETakeoff = () => (
  <ET>
    <TitleBar>
      <Quick>
        <QuickButton aria-label="Save"><Mini d="M1 2h8v6H1zM1 4h8" c="#4a78b8" f="#dbe8f8" /></QuickButton>
        <QuickButton aria-label="Undo"><Mini d="M2 6c1-4 6-4 6 0M5 7h4" c="#97a8bf" /></QuickButton>
        <QuickButton aria-label="Delete"><Mini d="M2 1l6 8M8 1L2 9" c="#44484e" /></QuickButton>
        <QuickButton $on aria-label="Select"><Mini d="M2 1l6 4-3 1-1 3z" c="#5a4fd0" f="#6e66e0" /></QuickButton>
        <QuickButton aria-label="Multi select"><Mini d="M2 3l5 3-3 1-1 2zM8 1v3" c="#4a62d0" f="#4a62d0" /></QuickButton>
        <QuickButton aria-label="Text"><Mini d="M2 7l3-6 3 6M3 5h4M2 9h6" c="#3853b8" /></QuickButton>
        <QuickButton aria-label="Dimension"><Mini d="M1 5h8M1 3v4M9 3v4" c="#5560c8" /></QuickButton>
        <QuickButton aria-label="Export"><Mini d="M1 8V4h3M4 8h5M6 3h2" c="#6b7f9c" /></QuickButton>
        <QuickButton $on aria-label="Area"><Mini d="M2 2h6v6H2z" c="#e7edf8" f="#fff" /></QuickButton>
        <Down />
      </Quick>
      <WindowTitle>eTakeoff Dimension - Project:20-005 MANOR AT BROKEN SOUND - Garage</WindowTitle>
      <Controls $w={60} $gap={6}>
        <Mini d="M2 6h6v2H2z" c="#eef4fb" f="#fff" /><Mini d="M3 2h5v4H3zM1 4h5v4H1z" c="#eef4fb" /><span /><Mini d="M2 2h6v6H2z" c="#eef4fb" />
      </Controls>
    </TitleBar>
    <TabRow>
      <FileTab>File</FileTab>
      {['Home', 'View', 'Drawing', 'Annotate', 'Settings', 'Planroom', 'Trial'].map(t => <Tab key={t} $on={t === 'Home'}>{t}</Tab>)}
      <Grow />
      <svg width="24" height="14" viewBox="0 0 24 14"><circle cx="6" cy="6" r="4.200" fill="#25c22c" /><path d="M4.500 5c0-2 3-2 3 0 0 1-1.500 1-1.500 2M6 8v1" stroke="#fff" fill="none" /><circle cx="18" cy="6" r="4.200" fill="#1f78c4" /><path d="M18 5v4M18 3v1" stroke="#fff" strokeWidth="1.500" /></svg>
    </TabRow>
    <Ribbon>
      <Group $w={80} $pad={1}>
        <GroupRow><Tools list={[['new', 'New', 26], ['open', 'Open\n▾', 26], ['edit', 'Edit', 26]]} /></GroupRow>
        <GroupName>Project</GroupName>
      </Group>
      <Group $w={121}>
        <NavStack>
          <NavIcons>
            <Mini d="M6 4a2 2 0 1 0 .1 0M5 6L2 9" c="#5fb05c" /><Mini d="M6 4a2 2 0 1 0 .1 0M5 6L2 9" c="#8a9a86" />
            <Mini d="M1 1l8 8M9 1L1 9M1 4V1h3M9 6v3H6" c="#66748a" /><Mini d="M2 1h7v6H4L2 9z" c="#a9b9cf" />
            <Mini d="M2 3l4 5h3V5L5 3z" c="#3f86cf" f="#7fb3e6" /><Mini d="M1 5l4-3v2h4v2H5v2z" c="#d9a324" f="#f2c34c" /><Mini d="M9 5L5 2v2H1v2h4v2z" c="#9fb0c8" f="#b7c5d8" />
          </NavIcons>
          <FieldLine><Field $w={105} aria-label="Drawing" defaultValue="S1.10_FOUND PLAN_Permit Set_01-1" /><Down /></FieldLine>
          <FieldLine><Field $w={66} $pale aria-label="Page" defaultValue="Page 1 of 1" /><Down /></FieldLine>
        </NavStack>
        <GroupName>Navigation</GroupName>
      </Group>
      <Group $w={327} $pad={3}>
        <GroupRow>
          <Tools list={tools1} /><Divider /><Tools list={tools2} /><Divider /><Tools list={tools3} />
        </GroupRow>
        <GroupName>Takeoff</GroupName>
      </Group>
      <Group $w={135}>
        <GroupRow><Tools list={tools4} /></GroupRow>
        <GroupName>Measurement Edit</GroupName>
      </Group>
      <Group $w={96}>
        <GroupRow>
          <ScaleStack>
            <Field $w={80} aria-label="Scale" defaultValue="3/32 Inch = 1 Foot" />
            <Field $w={80} aria-label="Scale type" defaultValue="Drawing" />
          </ScaleStack>
          <ScaleIcon><Mini d="M1 4h8v4H1zM1 2h4M6 1h3" c="#c9a23a" f="#f5dc8a" /></ScaleIcon>
        </GroupRow>
        <GroupName>Scale</GroupName>
      </Group>
    </Ribbon>
    <Work>
      <Side $w={214}>
        <ControlHead title="Control Panel 1" />
        <PanelHead title="Traces" note="(Double-click to measure)" />
        <Body $h={90}><Fill><TreeList rows={traces1} h={81} /></Fill><ScrollV gap={7} thumb={20} /></Body>
        <PanelHead title="Drawing Tree" extra={<><Sheet /><label><Check defaultChecked />All Pages</label></>} />
        <Body $h={121}><Fill><TreeList rows={drawings} h={112} /></Fill><ScrollV gap={0} thumb={70} /></Body>
        <PanelHead title="Layer List" extra={<label><Check />All</label>} />
        <Body $h={104}><Fill><LayerRow><Check defaultChecked /><LayerChip />11 Spread Footing</LayerRow></Fill><VBar $w={9} /></Body>
        <PanelHead title="Work Breakdowns" extra={<label><Check />Project Only</label>} />
        <Body>
          <Fill>
            <Breakdown>
              <thead><tr><th scope="col">Work Breakdown</th><th scope="col">Value</th></tr></thead>
              <tbody>
                {[['01 Work Area:', ''], ['02 Floor:', ''], ['03 Component:', '11'], ['04 csh @ "-":', ''], ['Bid Item:', ''], ['Etakeoff:', '']].map(([a, b]) => (
                  <tr key={a}><th scope="row">{a}</th><td>{b}</td></tr>
                ))}
              </tbody>
            </Breakdown>
          </Fill>
          <VBar $w={9}><VGap $h={8} /><Up /><VGap $h={2} /><VThumb $h={27}><Grip /></VThumb><VGap /><Down /></VBar>
        </Body>
      </Side>
      <Canvas>
        <CanvasRow>
          <Sheetview><FoundationPlan /></Sheetview>
          <VBar $w={9}><VGap $h={3} /><Up /><VGap $h={151} /><VThumb $h={114}><Grip /></VThumb><VGap /><Down /></VBar>
        </CanvasRow>
        <HBar $h={10}><LeftTri /><HGap $g={304} /><HThumb $g={145}><Grip /></HThumb><HGap $g={135} /><RightTri /><RightPad /></HBar>
      </Canvas>
      <RightSide $w={195}>
        <ControlHead title="Control Panel 2" />
        <PanelHead title="Traces" note="(Double-click to measure)" />
        <Body $h={81}><Fill><TreeList rows={traces2} h={71} /></Fill><ScrollV gap={16} thumb={12} w={11} /></Body>
        <PanelHead title="Favorites" />
        <Body $h={102}>
          <Fill>
            <Tree $h={51}>
              {['Global Favorites', 'Project Favorites'].map(t => <TreeRow key={t} $l={0} $group><Expander aria-label="Collapse"><Sign /></Expander><Name>{t}</Name></TreeRow>)}
              {favorites.map(t => <TreeRow key={t} $l={1}><Swatch $w={8} $c="#8380a6" /><Name>{t}</Name></TreeRow>)}
            </Tree>
          </Fill>
          <VBar $w={11} />
        </Body>
        <PanelHead title="Measurement Summary" extra={<><Folder c="#f3cf85" /><label><Check defaultChecked />Sync</label></>} />
        <Body $h={108}>
          <Fill>
            <Measures>
              <thead><tr><th scope="col">Description</th><th scope="col">Quantity</th><th scope="col">U/M</th></tr></thead>
              <tbody>
                {Array.from({ length: 9 }, (_, i) => (
                  <MeasureRow key={i} $on={i === 0}><td>{i === 0 ? favorites[0] : favorites[2]}</td><td>1.00</td><td>Ea</td></MeasureRow>
                ))}
              </tbody>
            </Measures>
          </Fill>
          <VBar $w={11}><VGap $h={9} /><Up /><VGap $h={38} /><VThumb $h={28}><Grip /></VThumb><VGap /><Down /></VBar>
        </Body>
        <PanelHead
          title="Quantity List"
          extra={<><Mini d="M2 1h4l2 2v6H2z" c="#6b6b3a" f="#fbf7a0" /><Mini d="M5 1a4 4 0 1 0 .1 0M5 3.500a1.500 1.500 0 1 0 .1 0" c="#2f6fc0" f="#8fc0f0" /><Mini d="M1 8l6-6M4 8l5-5" c="#666" f="#999" /></>}
        />
        <Body>
          <Fill>
            <QuantityTitle>{favorites[0]}</QuantityTitle>
            <Quantities>
              <QuantityRow $on><QuantityInput $flat defaultValue="1" />Point Count</QuantityRow>
              {quantities.map(([v, n]) => (
                <QuantityRow key={n}>
                  {n === 'Excavation_Choice' ? <QuantitySelect><option>{v}</option></QuantitySelect> : <QuantityInput defaultValue={v} />}
                  {n}
                </QuantityRow>
              ))}
            </Quantities>
          </Fill>
          <ScrollV gap={3} thumb={31} w={11} />
        </Body>
      </RightSide>
    </Work>
    <Status>For Help, press F1<Notice>2 new notifications</Notice></Status>
    <MainTaskbar />
    <BottomStrip />
  </ET>
);

/* ================= PlanSwift ================= */
const PS = styled.section`
  flex: 1;
  display: flex;
  flex-direction: column;
  padding-top: 2px;
  background: #fff;
`;
const PSTop = styled.header`
  height: 18px;
  display: flex;
  align-items: center;
  background: linear-gradient(#858585, #a0a0a0);
  color: #f3f3f3;
  font: 700 6px/16px ${dejavu};
`;
const Orb = styled.div`
  width: 18px;
  height: 18px;
  padding: 1px;
`;
const PSTab = styled.button<{ $on?: boolean }>`
  height: 16px;
  align-self: flex-end;
  padding: 0 4px;
  margin-right: ${p => (p.$on ? 1 : 0)}px;
  border-radius: 3px 3px 0 0;
  ${p => p.$on && css`background: linear-gradient(#fff, #dcdee2); color: #222;`}
`;
const PSSearch = styled.input`
  width: 36px;
  height: 10px;
  margin: 0 4px 0 3px;
  padding: 0 1px;
  background: #fff;
  border: 1px solid #b5b5b5;
  font: 6px/8px ${condensed};
  color: #777;
  &::placeholder { color: #888; opacity: 1; }
`;
const PSUndo = styled.button`
  height: 11px;
  width: 34px;
  display: flex;
  align-items: center;
  gap: 3px;
  padding-left: 3px;
  line-height: 9px;
  color: #222;
  background: #d9dbe0;
  border: 1px solid #b6b8bd;
`;
const PSTitle = styled.h1`
  flex: 1;
  margin: 0;
  font: 6px/18px ${open};
  color: #e4e4e4;
  text-align: center;
  white-space: nowrap;
`;
const PSRibbon = styled.div`
  height: 54px;
  padding: 1px 2px 0;
  display: flex;
  gap: 2px;
  background: linear-gradient(#d2d3d5, #c3c5c9 14%, #adb1ba 18%, #cdd1d6 55%, #eceff0);
  border-bottom: 3px solid #4a4a4a;
  font: 6px/8px ${open};
  color: #474d59;
`;
const PSGroup = styled.div<{ $w: number }>`
  width: ${p => p.$w}px;
  height: 50px;
  flex: none;
  display: flex;
  flex-direction: column;
  justify-content: space-between;
  background: linear-gradient(#cfd0d3, #bfc1c6 16%, #b3b6bd 18%, #dcdfe2 75%, #e4e6e8);
  border: 1px solid #bfc2c6;
  border-top: 0;
`;
const PSGroupRow = styled.div`
  display: flex;
  justify-content: center;
  padding-top: 4px;
`;
const PSGroupName = styled.div`
  height: 9px;
  line-height: 9px;
  text-align: center;
  color: #f6f6f6;
  background: #a6a8ab;
`;
const PSTool = styled.button<{ $w: number; $off?: boolean }>`
  width: ${p => p.$w}px;
  display: flex;
  flex-direction: column;
  align-items: center;
  white-space: pre;
  text-align: center;
  gap: 1px;
  opacity: ${p => (p.$off ? 0.6 : 1)};
`;
const psGroups: { n: string; w: number; tools: [string, string, number, boolean?][] }[] = [
  { n: 'Job', w: 96, tools: [['psNew', 'New', 23], ['psOpen', 'Open', 23], ['print', 'Print', 23], ['email', 'Email\nJob', 23]] },
  { n: 'Navigate', w: 47, tools: [['back', 'Back', 23], ['fwd', 'Fwd', 22, true]] },
  { n: 'Zoom / Pan', w: 128, tools: [['zoom', 'Zoom', 26], ['fit', 'Zoom\nTo Fit', 26], ['zin', 'Zoom\nIn', 26], ['zout', 'Zoom\nOut', 26], ['pan', 'Pan', 22]] },
  { n: 'Measure', w: 64, tools: [['scale', 'Scale\n▾', 24], ['dim', 'Dimension', 37]] },
  { n: 'Takeoff', w: 134, tools: [['psArea', 'Area\n▾', 24], ['linear', 'Linear\n▾', 24], ['segment', 'Segment\n▾', 35], ['psCount', 'Count\n▾', 25], ['send', 'Send\nData', 23]] },
  { n: 'Record', w: 63, tools: [['digit', 'Digitizer\nRecord', 33, true], ['section', 'New\nSection', 27, true]] },
  { n: 'Annotations', w: 122, tools: [['note', 'Note', 24], ['overlay', 'Overlay', 28], ['highlighter', 'Highlighter\n▾', 42], ['image', 'Image', 25]] },
];
const PSBody = styled.div`
  flex: 1;
  min-height: 470px;
  display: flex;
  background: #cfd2d6;
`;
const PSSide = styled.aside<{ $w: number }>`
  width: ${p => p.$w}px;
  flex: none;
  display: flex;
  flex-direction: column;
  background: #fff;
  border: solid #8b9097;
  border-width: 0 1px;
`;
const PSRail = styled(PSSide)`margin-left: 3px;`;
const PSHead = styled.div`
  flex: none;
  height: 14px;
  padding: 0 3px;
  display: flex;
  align-items: center;
  justify-content: space-between;
  background: linear-gradient(#e9ebee, #c6c9cf);
  border-bottom: 1px solid #6f747b;
  font: 700 8px/12px ${arial};
  color: #111;
  white-space: nowrap;
  overflow: hidden;
`;
const SmallHead = styled.span`font-size: 7px;`;
const PSTools = styled.div`
  flex: none;
  height: 15px;
  padding-left: 4px;
  display: flex;
  align-items: center;
  gap: 3px;
  background: linear-gradient(#cdd0d5, #b9bdc4 50%, #d2d5d9);
  border-bottom: 1px solid #8b9097;
`;
const PSFind = styled.label`
  flex: none;
  height: 12px;
  display: flex;
  align-items: center;
  font: 6px/10px ${condensed};
  color: #444;
  padding-left: 3px;
  gap: 3px;
  border-bottom: 1px solid #8b9097;
  input { flex: 1; min-width: 0; height: 11px; border-left: 1px solid #8b9097; }
`;
const PSTree = styled.div`
  flex: none;
  height: 261px;
  display: flex;
  background: #fff;
`;
const Pages = styled.ul`
  flex: 1;
  height: 254px;
  display: flex;
  flex-direction: column;
  font: 6px/8px ${condensed};
  white-space: nowrap;
`;
const PageRow = styled.li<{ $l: number; $on?: boolean; $bold?: boolean }>`
  flex: 1;
  min-height: 0;
  display: flex;
  align-items: center;
  gap: 1px;
  padding-left: ${p => [25, 34, 49][p.$l]}px;
  color: #262626;
  position: relative;
  background: linear-gradient(90deg, transparent 28px, #ddd 28px, #ddd 29px, transparent 29px, transparent 46px, #ddd 46px, #ddd 47px, transparent 47px);
  ${p => p.$on && css`background: #0a78d0; color: #d9ecff;`}
  ${p => p.$bold && css`font-weight: 700; color: #fff;`}
`;
const Marker = styled.span`
  position: absolute;
  left: 216px;
  top: 2px;
  width: 7px;
  height: 5px;
  background: #fbe6a8;
  border: 1px solid #caa23c;
`;
const ToggleMini = styled.button`width: 7px; height: 7px; display: flex; align-items: center; justify-content: center;`;
const PageIcon = () => <svg width="8" height="8" viewBox="0 0 8 8"><path d="M1 7.500V3h2V1h4v6.500z" fill="#6f6f6a" /><path d="M2 5h2M4 3h2" stroke="#c9c9c4" strokeWidth=".8" /></svg>;
const setName = '_Permit Set_01-16-20';
const sheets = (names: string[]) => names.map(t => ({ l: 2, t: t + setName + '(1)' }));
const pages: { l: number; t: string; on?: boolean; bold?: boolean }[] = [
  ...sheets(['A1.20_LVL 2 FLR PLAN', 'A11.00_UL DTLS', 'A2.10_LVL 1 RCP STAIR TOWER RCP']),
  { l: 2, t: 'A3.10_ELEVATIONS' + setName + '(1)', on: true, bold: true },
  ...sheets(['A3.30_BLDG SECT', 'A5.00_VERT CIRC STAIR TOWER NO. 1 2', 'A6.00_WALL SECT WALL TYPE DOOR SCHED', 'A7.00_STAIR DTLS', 'A7.01_DTLS', 'AC0.01_LS INFORMATION', 'AC1.10_LVL 1 LS PLAN', 'AC1.20_LVL 2 LS PLAN']),
  { l: 2, t: 'AS1.00_SITE PLAN' + setName + ' 2(1)' },
  ...sheets(['AS1.01_SITE PLAN INFORMATION', 'AS1.10_SITE DTLS']),
  { l: 0, t: 'Structure [0 Pages]' },
  { l: 1, t: 'Converted [11 Pages]' },
  ...sheets(['S0.01_STRUCT GEN NOTES', 'S0.02_SCHEDS WIND TABLES', 'S1.10_FOUND PLAN', 'S1.20 PT_2ND FLR POST TENSION PLAN', 'S1.20 R_2ND FLR REINFORCING PLAN']),
  { l: 2, t: 'S2.01_FOUND DTLS' + setName + ' 2(1)', on: true },
  ...sheets(['S3.01_MASONRY DTLS', 'S4.01_FLR DTLS', 'S4.02_STRUCT DTLS']),
  { l: 2, t: 'S5.01_TRUSS ROOF DTLS' + setName + ' 2(1)' },
  ...sheets(['S6.01_TRUSS ROOF DTLS']),
];
const ClassicBar = styled.div`
  width: 9px;
  flex: none;
  display: flex;
  flex-direction: column;
  background: #efefef;
`;
const ClassicButton = styled.button`
  width: 9px;
  height: 9px;
  flex: none;
  border: 1px solid #333;
  background: #fff;
  display: flex;
  align-items: center;
  justify-content: center;
`;
const ClassicThumb = styled.div`
  flex: 1;
  border: 1px solid #555;
  background: #fff;
`;
const Total = styled.div`
  flex: none;
  height: 12px;
  padding-left: 3px;
  line-height: 11px;
  font-family: ${condensed};
  background: linear-gradient(#c0c3c9, #d8dadd);
  border-top: 1px solid #8b9097;
  border-bottom: 1px solid #9ba0a6;
`;
const SplitDots = styled.div`
  flex: none;
  height: 4px;
  padding: 1px 44%;
  background: radial-gradient(#888 40%, transparent 45%) 0 0/2px 2px;
  background-color: #dfe1e4;
  background-clip: content-box, border-box;
`;
const NavButton = styled.button<{ $on?: boolean }>`
  flex: none;
  height: 13px;
  padding-left: 2px;
  display: flex;
  align-items: center;
  gap: 2px;
  text-align: left;
  font: 700 6px/11px ${open};
  color: ${p => (p.$on ? '#6e4a1a' : '#333a48')};
  background: ${p => (p.$on ? 'linear-gradient(#fbb24a, #fcd07a)' : 'linear-gradient(#eceef0, #b9bdc5)')};
  border-bottom: 1px solid #8b9097;
`;
const NavMore = styled(NavButton)`justify-content: flex-end; padding-right: 1px;`;
const PSMain = styled.main`
  flex: 1;
  min-width: 0;
  margin-left: 4px;
  display: flex;
  flex-direction: column;
`;
const PageTabs = styled.nav`
  flex: none;
  height: 14px;
  display: flex;
  align-items: stretch;
  background: #4a4a4a;
  font: 700 9px/13px ${open};
  color: #fff;
  white-space: nowrap;
`;
const PageTab = styled.button<{ $on?: boolean; $boxed?: boolean }>`
  padding: 0 5px;
  ${p => p.$on && css`background: #f2f3f4; color: #111;`}
  ${p => p.$boxed && css`border: 1px solid #9a9a9a; margin-left: 2px; padding: 0 4px; line-height: 11px;`}
`;
const CloseTab = styled.button`
  width: 9px;
  height: 10px;
  margin: 2px 2px 0 auto;
  background: #fff;
  display: flex;
  align-items: center;
  justify-content: center;
`;
const Gutter = styled.div`
  width: 6px;
  flex: none;
  display: flex;
  align-items: flex-end;
  background: #a09b96;
`;
const Expand = () => <svg width="6" height="9" viewBox="0 0 6 9"><rect width="6" height="9" fill="#f2f2f2" /><path d="M1 7.500L5 2M2 2h3v3" stroke="#333" fill="none" /></svg>;
const White = styled.div`flex: 1; display: flex; min-height: 0; background: #fff;`;
const DarkStatus = styled.footer`
  height: 13px;
  flex: none;
  display: flex;
  align-items: center;
  background: #3a3738;
  color: #d4d4d4;
  font: 6px/10px ${condensed};
  white-space: nowrap;
  overflow: hidden;
`;
const StatusLead = styled.div`width: 161px; flex: none;`;
const Cell = styled.div<{ $w: number }>`
  width: ${p => p.$w}px;
  flex: none;
  height: 11px;
  padding-left: 1px;
  border-left: 1px solid #565354;
  display: flex;
  align-items: center;
  gap: 2px;
`;
const Snap = styled.button`
  height: 10px;
  padding: 0 1px;
  background: #9a9a9a;
  color: #eee;
  line-height: 10px;
`;
const PathText = styled.div`flex: 1; min-width: 0; overflow: hidden; padding-left: 4px; border-left: 1px solid #565354; color: #e4e4e4;`;

const KD = styled.select`
  margin: 3px 2px 2px;
  height: 11px;
  flex: none;
  width: 18px;
  border: 1px solid #aaa;
  background: #fff;
  appearance: none;
  font: 6px/9px ${condensed};
`;
const MiniFolders = styled.ul`
  height: 73px;
  flex: none;
  display: flex;
  flex-direction: column;
  overflow: hidden;
  font: 6px/8px ${condensed};
`;
const MiniRow = styled.li`flex: 1; min-height: 0; display: flex; align-items: center; gap: 1px; padding-left: 2px;`;
const ToolColumn = styled.div<{ $h: number }>`
  flex: none;
  height: ${p => p.$h}px;
  padding-left: 4px;
  display: flex;
  flex-direction: column;
  justify-content: space-around;
  background: #c3c6cc;
  border-bottom: 1px solid #6f747b;
`;
const Space = styled.div<{ $h: number }>`flex: none; height: ${p => p.$h}px;`;
const PropTable = styled.table`
  width: 100%;
  table-layout: fixed;
  font: 6px/8px ${condensed};
  flex: none;
  th { border: 1px solid #9a9a9a; background: #f2f2f2; }
  td, th { white-space: nowrap; height: 10px; }
`;
const ScrollPair = styled.div`flex: none; height: 11px; display: flex; gap: 2px; align-items: center;`;

const NavGlyph = ({ c, d }: { c: string; d: string }) => <svg width="9" height="9" viewBox="0 0 9 9"><path d={d} fill={c} stroke="#8a7a4a" strokeWidth=".4" /></svg>;
const diamond = 'M4.500 0L9 4.500 4.500 9 0 4.500z';
const toolGlyphs: Record<string, ReactNode> = {
  up: <Mini d="M1 8V5h2V3h3v5M8 2v6" c="#d9b73a" f="#f6e48a" />,
  plus: <Mini d="M5 1v8M1 5h8M4 1h2v8H4zM1 4h8v2H1z" c="#58b83a" />,
  del: <Mini d="M1 1l8 8M9 1L1 9M2 1l7 7M8 1L1 8" c="#cf2418" />,
  props: <Mini d="M1 4h7v4H1zM5 2h4" c="#c89a4a" f="#fdf4d6" />,
  refresh: <Mini d="M2 5c0-3 4-4 6-1M8 5c0 3-4 4-6 1M6 4h2V2" c="#3fa33a" />,
  sort: <Mini d="M3 1v8M1.500 7L3 9M7 9V1M6 3h3" c="#222" />,
};

/* ---------- elevation sheet ---------- */
const light = { stroke: '#b4b4b4', fill: 'none', strokeWidth: 0.9 };
const heavy = { stroke: '#1a1a1a', fill: 'none', strokeWidth: 1.8 };
const thin = { stroke: '#666', fill: 'none', strokeWidth: 0.9 };
const LevelMark = ({ y }: { y: number }) => (
  <g><circle cx="1569" cy={y} r="7" fill="#f4ffff" stroke="#456" strokeWidth=".8" /><path d={`M1569 ${y}v-7a7 7 0 0 1 7 7zM1569 ${y}v7a7 7 0 0 1 -7 -7z`} fill="#04292e" /><path d={`M1569 ${y - 13}v26`} stroke="#567" strokeWidth=".7" /></g>
);
const Elevation = () => (
  <svg role="img" aria-label="South elevation">
    <g transform="translate(-1291 -88)">
      <g {...light}>
        {[1659, 1794, 1951].map(x => <g key={x}><circle cx={x + 0.5} cy="161.500" r="15" strokeDasharray="3 1" /><path d={`M${x + 0.5} 177V380`} strokeDasharray="50 8 12 8" /></g>)}
        <path d="M1575 291.500H2009M1575 374.500H2009" stroke="#999" strokeDasharray="22 7 7 7" />
        <path d="M1649 383.500H1832V378H1922V383.500H1982V378H2009" />
        <circle cx="1989" cy="108" r="18" opacity=".3" /><path d="M1971 108.500h36" opacity=".3" /><path d="M1622 88a26 17 0 0 0 52 0" opacity=".3" /><path d="M1618 535a30 20 0 0 1 60 0" opacity=".2" />
        <path d="M1735 355L1752 325M1838 320l20 12M1888 332l24-10M1838 372l25-20M1885 352l28 20M1986 372l23-10M1990 322l19 9" strokeDasharray="8 6" />
        <path d="M1794 311l2 5a2 2 0 1 1-4 0zM1951 311l2 5a2 2 0 1 1-4 0zM1646 287l2 5a2 2 0 1 1-4 0zM1660 287l2 5a2 2 0 1 1-4 0z" stroke="#888" />
      </g>
      <T x={1659} y={166} s={13} f={open} c="#aaa">1</T><T x={1794} y={166} s={13} f={open} c="#aaa">2</T><T x={1951} y={166} s={13} f={open} c="#aaa">3</T>

      <path d="M1639.500 201.500L1689 177.500 1738.500 201.500V209.500H1639.500zM1639.500 201.500H1738.500M1640 210L1645 216.500H1734L1738 210" {...thin} />
      <path d="M1672 188h12M1690 186h12M1664 193h14M1684 193h16M1706 192h8M1656 198h16M1680 198h18M1702 198h18M1678 188v4M1692 186v6M1670 193v5M1690 193v5M1708 193v5" stroke="#999" strokeWidth=".7" strokeDasharray="4 1" />
      <path d="M1650.500 210v6M1653.500 210v6M1663.500 210v6M1666.500 210v6M1675.500 210v6M1678.500 210v6M1688.500 210v6M1691.500 210v6M1700.500 210v6M1703.500 210v6M1713.500 210v6M1716.500 210v6M1726.500 210v6M1729.500 210v6" {...thin} stroke="#999" />
      <path d="M1649.500 216V374M1649 374h6v3.500h74M1728.500 216V378M1648 254.500h82v4.500h-82zM1729 265.500H2009M1729 270.500H2009" {...heavy} />
      <path d="M1650 216.500h6" stroke="#111" strokeWidth="1.500" />
      <path d="M1731 320.500H1754.500V374M1730 320V374" {...heavy} />
      <path d="M1730.500 320V376" stroke="#1a1a1a" strokeWidth="3" />
      <path d="M1755 321.500H1828M1755 326.500H1828M1755 374.500H1828.500V322C1830 308 1850 299.500 1873 299.500S1917 308 1918.500 322V374.500H1982.500V322C1984 314 1995 307 2009 304M1918 321.500H1982M1918 326.500H1982" {...heavy} />
      <path d="M1750 349h5" stroke="#111" strokeWidth="1.500" />
      <path d="M1710.500 90V408M1697 88a20 10 0 0 0 26 0" {...thin} />
      <path d="M1698 90h13v11z" fill="#000" /><path d="M1680 407h30v8h-30z" fill="#000" />
      <path d="M1729 128.500L1736 121.500H1802L1809 128.500 1802 135.500H1736zM1729 128.500H1719L1695 186M1788 399.500L1795 393.500H1861L1868 399.500 1861 406.500H1795zM1788 399.500H1763L1747 366M1680 415L1678 442M1740 197.500H1752V203zM1862 336L1867.500 326H1878.500L1884 336 1878.500 346H1867.500z" {...thin} />
      <path d="M1593 444L1600 438H1666L1673 444 1666 450H1600z" {...light} />
      <path d="M1694 190l-1-10 5 2zM1745 361l7 9-4 2z" fill="#000" />
      <T x={1768} y={132} s={11} f={open}>073213</T><T x={1828} y={404} s={11} f={open}>081113</T><T x={1632} y={448} s={11} f={open}>092400.A</T>
      <T x={1739} y={189} s={10} f={arial} a="start">12"</T><T x={1757} y={203} s={10} f={arial} a="start">4 1/4"</T>
      <T x={1873} y={340} s={10} f={arial}>O1</T><T x={1873} y={360} s={11} f={arial}>OPENING</T>

      <rect x="1424" y="256" width="233" height="144" fill="#c6ffff" style={{ mixBlendMode: 'multiply' }} />
      <LevelMark y={291} /><LevelMark y={374} />
      <T x={1586} y={287} s={11} f={open} a="start" c="#4d7f84">LEVEL 2</T><T x={1586} y={306} s={11} f={open} a="start" c="#4d7f84">11' - 0"</T>
      <T x={1586} y={370} s={11} f={open} a="start" c="#4d7f84">LEVEL 1</T><T x={1586} y={388} s={11} f={open} a="start" c="#4d7f84">0' - 0"</T>

      <path d="M1389.500 88V535" stroke="#000" strokeWidth="3" />
      <path d="M1369 111.500H1389M1369 272.500H1389M1369 432.500H2009M1391 465.500H2009M1391 482.500H2009M1439.500 432V482" stroke="#555" />
      <T x={1378} y={197} s={14} f={arial} c="#111">F</T><T x={1378} y={357} s={14} f={arial} c="#111">E</T><T x={1378} y={517} s={14} f={arial} c="#111">D</T>
      <T x={1413} y={458} s={28} f={arial} c="#000">3</T><T x={1443} y={462} s={28} f={arial} a="start" c="#000">SOUTH ELEVATION</T>
      <T x={1415} y={478} s={11} f={arial}>A3.10</T><T x={1452} y={478} s={10} f={arial} a="start">SCALE:</T><T x={1503} y={478} s={10} f={arial} a="start">3/32" = 1'-0"</T>
    </g>
  </svg>
);

const PlanSwift = () => (
  <PS>
    <PSTop>
      <Orb><svg width="16" height="16" viewBox="0 0 16 16"><circle cx="8" cy="8" r="7" fill="#e9ecee" stroke="#6e7377" /><path d="M3 11c1-6 5-8 8-4M6 9c2-2 5-1 6 2" fill="none" stroke="#5c6a72" strokeWidth="1.500" /></svg></Orb>
      {['Home', 'Page', 'Other', 'View', 'Estimating', 'Lists', 'Templates', 'Settings', 'Reports', 'Help'].map(t => <PSTab key={t} $on={t === 'Home'}>{t}</PSTab>)}
      <PSSearch aria-label="Search commands" placeholder="Search" />
      <PSUndo><svg width="9" height="8" viewBox="0 0 9 8"><path d="M1 3h5c3 0 2 4-1 4M3 1L1 3l2 2" stroke="#2a6ac0" fill="none" strokeWidth="1.300" /></svg>Undo</PSUndo>
      <PSTitle>PlanSwift Professional 9.0 - 20-005 MANOR AT BROKEN SOUND - Garage</PSTitle>
      <Controls $w={54} $gap={9}><Mini d="M2 6h6" c="#666" /><Mini d="M2 2h6v5H2z" c="#666" /><Mini d="M2 2l5 5M7 2L2 7" c="#555" /></Controls>
    </PSTop>
    <PSRibbon>
      {psGroups.map(g => (
        <PSGroup key={g.n} $w={g.w}>
          <PSGroupRow>{g.tools.map(([i, t, w, off]) => <PSTool key={i} $w={w} $off={off}><Icon n={i} /><span>{t}</span></PSTool>)}</PSGroupRow>
          <PSGroupName>{g.n}</PSGroupName>
        </PSGroup>
      ))}
    </PSRibbon>
    <PSBody>
      <PSSide $w={257}>
        <PSHead><span>Pages, Bookmarks</span><span>«</span></PSHead>
        <PSTools>{['up', 'plus', 'del', 'props', 'refresh', 'sort'].map(k => <button key={k} aria-label={k}>{toolGlyphs[k]}</button>)}</PSTools>
        <PSFind>Search:<input aria-label="Search pages" /></PSFind>
        <PSTree>
          <Pages>
            {pages.map(p => (
              <PageRow key={p.t} $l={p.l} $on={p.on} $bold={p.bold}>
                {p.l < 2 ? <><ToggleMini aria-label="Collapse"><Sign /></ToggleMini><Folder c="#f7e08a" /></> : <PageIcon />}
                <Name $m={p.l < 2 ? 0 : 1}>{p.t}</Name>
                {p.on && <Marker />}
              </PageRow>
            ))}
          </Pages>
          <ClassicBar><ClassicButton aria-label="Up"><Up /></ClassicButton><Space $h={59} /><ClassicThumb /><ClassicButton aria-label="Down"><Down /></ClassicButton></ClassicBar>
        </PSTree>
        <Total>30 Total Pages</Total>
        <SplitDots />
        <PSTools>{['up', 'plus', 'del', 'props', 'sort'].map(k => <button key={k} aria-label={k}>{toolGlyphs[k]}</button>)}</PSTools>
        <PSFind>Search:<input aria-label="Search bookmarks" /></PSFind>
        <White />
        <SplitDots />
        <NavButton $on><NavGlyph c="#fff8e0" d="M1 0h5l2 2v7H1z" />Pages, Bookmarks</NavButton>
        <NavButton><NavGlyph c="#7fae5a" d="M0 1h4v3H0zM5 1h3v3H5zM0 5h4v3H0zM6 6h3v3H6z" />Takeoff Summary</NavButton>
        <NavButton><NavGlyph c="#fbe14c" d="M1 1h7v5L6 8H1z" />Notes</NavButton>
        <NavButton><NavGlyph c="#a5adb5" d="M1 6l5-5 2 2-5 5-2 0z" />Attachments</NavButton>
        <NavMore aria-label="More"><Down /></NavMore>
      </PSSide>
      <PSMain>
        <PageTabs>
          <PageTab>S6.01_TRUSS ROOF DTLS_Permit Set_01-16-20(1)</PageTab>
          <PageTab $on>A3.10_ELEVATIONS_Permit Set_01-16-20(1)</PageTab>
          <PageTab>S2.01_FOUND DTLS_Permit Set_01-16-20 2(1)</PageTab>
          <PageTab $boxed>&lt;Select a Page&gt;</PageTab>
          <CloseTab aria-label="Close page"><Cross c="#000" /></CloseTab>
        </PageTabs>
        <White>
          <Gutter><Expand /></Gutter>
          <Sheetview><Elevation /></Sheetview>
          <VBar $w={9} $ps><VGap $h={3} /><Up /><VGap $h={226} /><VThumb $h={32} $c="#cdcdcd" /><VGap /><Down /></VBar>
        </White>
        <HBar $h={8}><LeftTri /><HGap $g={179} /><HThumb $g={76} $flat /><HGap $g={455} /><RightTri /><RightPad /></HBar>
      </PSMain>
      <PSRail $w={25}>
        <PSHead><SmallHead>T...</SmallHead><span>»</span></PSHead>
        <ToolColumn $h={28}>{toolGlyphs.props}{toolGlyphs.refresh}</ToolColumn>
        <KD aria-label="Template set"><option>KD</option></KD>
        <MiniFolders>
          {['F', 'C', 'C', 'D', 'C', 'B', 'M', 'M'].map((t, i) => <MiniRow key={i}><ToggleMini aria-label="Expand"><Sign plus /></ToggleMini><Folder c="#f7e08a" />{t}</MiniRow>)}
        </MiniFolders>
        <Space $h={52} />
        <ScrollPair><ClassicButton aria-label="Left"><LeftTri /></ClassicButton><ClassicButton aria-label="Right"><RightTri /></ClassicButton></ScrollPair>
        <SplitDots />
        <ToolColumn $h={55}>{toolGlyphs.props}{toolGlyphs.del}<Mini d="M1 2h8v6H1zM1 5h8" c="#b59a5a" f="#f4e8c4" />{toolGlyphs.refresh}</ToolColumn>
        <Space $h={31} />
        <SplitDots />
        <PropTable><thead><tr><th scope="col">P...</th><th scope="col">V...</th></tr></thead><tbody><tr><td>Nar</td><td>A3.</td></tr></tbody></PropTable>
        <White />
        <NavButton $on><NavGlyph c="#f2e2b0" d="M1 1h7v7H1zM1 3h7v1H1z" />T...</NavButton>
        <NavButton><NavGlyph c="#c9601c" d={diamond} />S...</NavButton>
        <NavButton><NavGlyph c="#42b83a" d={diamond} />D...</NavButton>
        <NavMore aria-label="More"><Down /></NavMore>
      </PSRail>
    </PSBody>
    <DarkStatus>
      <StatusLead />
      <Cell $w={99}>-2.2, 2373.5</Cell>
      <Cell $w={34}>138.9%</Cell>
      <Cell $w={182}><Snap>Snap</Snap><Snap>Ortho</Snap><Snap>FreeHand</Snap><Snap>Verify Points</Snap></Cell>
      <PathText>\Storages\Local\Jobs\20-005 MANOR AT BROKEN SOUND - Garage\Pages\On-Screen Projects -\20-005 MANOR AT BROKEN SOUND - Garage\Bid Docs\Architectural\Converted\A3.10_ELEVATIONS_Permit Set_01-16-20(1)</PathText>
    </DarkStatus>
    <SecondTaskbar />
  </PS>
);

export default function App() {
  return (
    <>
      <Global />
      <Desktop>
        <Monitor><ETakeoff /></Monitor>
        <Monitor><PlanSwift /></Monitor>
      </Desktop>
    </>
  );
}
